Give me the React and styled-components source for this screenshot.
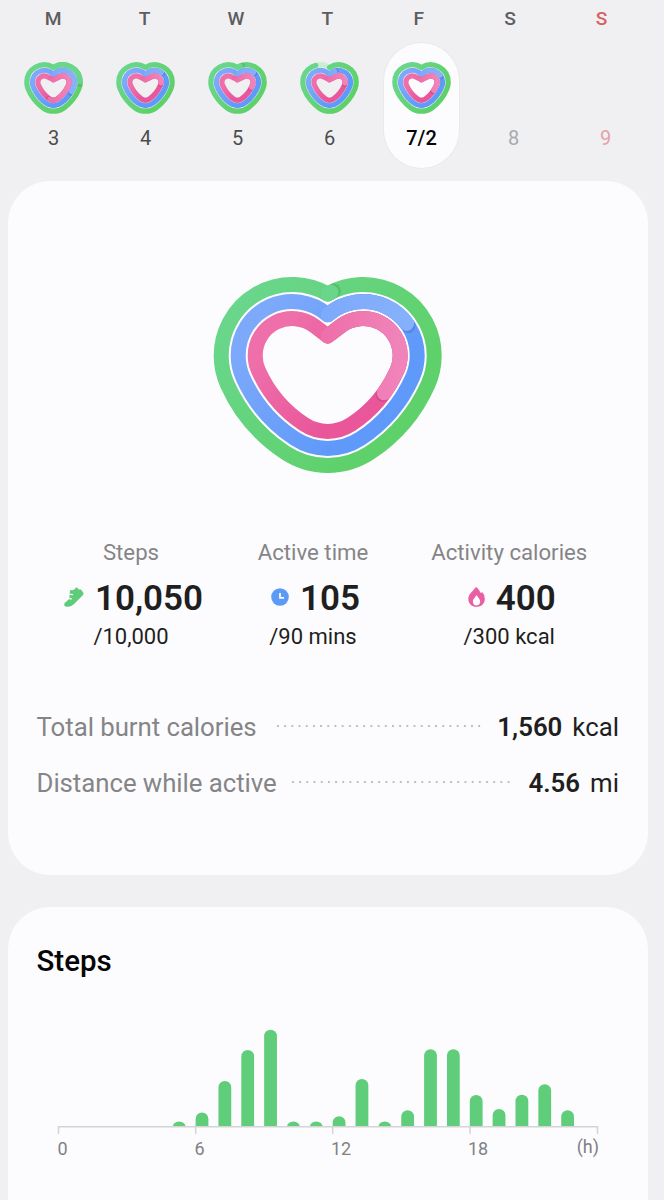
import React from "react";
import styled, { createGlobalStyle } from "styled-components";

const GlobalStyle = createGlobalStyle`
  * {
    box-sizing: border-box;
  }
  body {
    margin: 0;
    background: #f0f0f2;
    font-family: Roboto, "Liberation Sans", sans-serif;
    color: #1f1f21;
  }
`;

const Page = styled.main`
  width: 664px;
  height: 1200px;
  overflow: hidden;
  padding: 7px 0 0 7.5px;
`;

const Weekdays = styled.div`
  display: grid;
  grid-template-columns: repeat(7, 91.4px);
`;

const Weekday = styled.div`
  font-size: 19.2px;
  line-height: 24px;
  font-weight: 500;
  text-align: center;
  color: ${(props) => (props.$sunday ? "#d9605f" : "#5d5d60")};
`;

const Days = styled.div`
  display: grid;
  grid-template-columns: repeat(7, 92px);
  justify-items: center;
  margin-top: 11.5px;
`;

const Day = styled.div`
  display: flex;
  flex-direction: column;
  align-items: center;
  width: 75px;
  height: 125px;
  padding-top: 19.2px;
  border-radius: 38px;
  background: ${(props) => (props.$selected ? "#fcfcfe" : "transparent")};
  box-shadow: ${(props) => (props.$selected ? "0 0 0 1px #e9e9ec" : "none")};
`;

const HeartSlot = styled.div`
  height: 52.5px;
`;

const DayNumber = styled.div`
  margin-top: 11.8px;
  font-size: 20px;
  line-height: 24px;
  font-weight: ${(props) => (props.$selected ? 500 : 400)};
  color: ${(props) => props.$color};
`;

const Card = styled.section`
  width: 640.5px;
  border-radius: 42px;
  background: #fcfcfe;
`;

const SummaryCard = styled(Card)`
  height: 694px;
  margin-top: 13.5px;
  padding-top: 96px;
`;

const StepsCard = styled(Card)`
  height: 400px;
  margin-top: 32px;
  padding-top: 36px;
`;

const BigHeart = styled.div`
  height: 196px;
  padding-left: 205.5px;
`;

const Stats = styled.div`
  display: grid;
  grid-template-columns: 182px 182px 210.5px;
  padding-left: 32.5px;
  margin-top: 66px;
`;

const Stat = styled.div`
  display: flex;
  flex-direction: column;
  align-items: center;
`;

const StatLabel = styled.div`
  font-size: 22.2px;
  line-height: 26px;
  color: #858587;
`;

const StatValue = styled.div`
  display: flex;
  align-items: center;
  gap: 11px;
  margin: 14px 0 5.2px 5px;
  font-size: 35px;
  line-height: 40px;
  font-weight: 600;
`;

const IconSlot = styled.span`
  padding-bottom: 5px;
`;

const StatGoal = styled.div`
  font-size: 22px;
  line-height: 26px;
`;

const Totals = styled.div`
  display: flex;
  flex-direction: column;
  gap: 24px;
  margin-top: 61px;
  padding: 0 29px;
`;

const TotalRow = styled.div`
  display: flex;
  align-items: center;
  font-size: 25.8px;
  line-height: 32px;
`;

const TotalLabel = styled.span`
  color: #858587;
  letter-spacing: -0.05px;
`;

const Dots = styled.span`
  flex: 1;
  height: 2px;
  margin: 0 ${(props) => props.$right}px 2px ${(props) => props.$left}px;
  background: radial-gradient(circle at 1px 1px, #bdbdc1 0.9px, transparent 1.4px);
  background-size: 7.2px 2px;
`;

const TotalValue = styled.span`
  font-weight: 600;
  margin-right: 10px;
`;

const Title = styled.h2`
  margin: 0 0 0 29px;
  font-size: 29.5px;
  line-height: 36px;
  font-weight: 500;
  color: #050506;
`;

const Svg = styled.svg`
  display: block;
  overflow: visible;
`;

const AxisLabel = styled.text`
  font-size: 18px;
  fill: #818184;
`;

const COLORS = {
  green: { from: "#69d68b", to: "#5fd16b", over: "#69d68b", tip: "#69d68b", shadow: "#2f8f45" },
  blue: { from: "#7da9fb", to: "#5f99f9", over: "#7daafb", tip: "#87b1fb", shadow: "#2c57b8" },
  pink: { from: "#ee6fa9", to: "#e9569a", over: "#ee70aa", tip: "#f084ba", shadow: "#a0285f" },
};

// Heart outline, clockwise from the notch. The lobes are centred on (+-dx, 0) and
// turn through angle past the horizontal, then one wide arc runs down each side
// to the bottom arc, which has radius r + k.
function heartPath({ dx, r, k, depth, angle, notch }) {
  const a = (angle * Math.PI) / 180;
  const b = depth - k;
  const side = (dx * dx + b * b - k * k) / (2 * (dx * Math.cos(a) - b * Math.sin(a) - k));
  const rs = r + side;
  const rb = r + k;
  const cx = dx - side * Math.cos(a);
  const cy = -side * Math.sin(a);
  const sx = dx + r * Math.cos(a);
  const sy = r * Math.sin(a);
  const bx = (-cx / (side - k)) * rb;
  const by = b + ((b - cy) / (side - k)) * rb;

  let start = [0, -Math.sqrt(Math.max(0, r * r - dx * dx))];
  let touch = start;
  if (notch) {
    // straight run from the notch to where it touches the lobe
    const t = Math.atan2(notch, dx) + Math.acos(r / Math.hypot(dx, notch));
    start = [0, -notch];
    touch = [dx - r * Math.cos(t), -r * Math.sin(t)];
  }

  return [
    `M${start}L${touch}`,
    `A${r} ${r} 0 0 1 ${dx + r} 0`,
    `A${r} ${r} 0 0 1 ${sx} ${sy}`,
    `A${rs} ${rs} 0 0 1 ${bx} ${by}`,
    `A${rb} ${rb} 0 0 1 ${-bx} ${by}`,
    `A${rs} ${rs} 0 0 1 ${-sx} ${sy}`,
    `A${r} ${r} 0 0 1 ${-dx - r} 0`,
    `A${r} ${r} 0 0 1 ${-touch[0]} ${touch[1]}Z`,
  ].join("");
}

const SIZES = {
  big: {
    width: 229,
    height: 196,
    box: "-114.7 -78.5 229 196",
    stroke: 15,
    shade: 0.5,
    dx: 35.5,
    k: 6,
    depth: 38.9,
    angle: 24,
    rings: [
      { color: "green", r: 71 },
      { color: "blue", r: 54 },
      { color: "pink", r: 37, notch: 19.5 },
    ],
  },
  small: {
    width: 59,
    height: 52.5,
    box: "-29.5 -20.3 59 52.5",
    stroke: 5.2,
    shade: 1.5,
    dx: 9.2,
    k: 0.6,
    depth: 11.4,
    angle: 22,
    rings: [
      { color: "green", r: 17.5 },
      { color: "blue", r: 11.9 },
      { color: "pink", r: 6.4, notch: 2.5 },
    ],
  },
};

// progress is a percentage per ring; what is over 100 overlaps the first lap
const Heart = ({ id, size, progress }) => {
  const s = SIZES[size];
  return (
    <Svg width={s.width} height={s.height} viewBox={s.box} fill="none">
      <defs>
        {s.rings.map((ring) => (
          <React.Fragment key={ring.color}>
            <linearGradient id={`${id}-${ring.color}`} gradientUnits="userSpaceOnUse" x1={-ring.r} y1={-ring.r} x2={ring.r} y2={ring.r * 0.6}>
              <stop offset="0" stopColor={COLORS[ring.color].from} />
              <stop offset="1" stopColor={COLORS[ring.color].to} />
            </linearGradient>
            <linearGradient id={`${id}-${ring.color}-over`} gradientUnits="userSpaceOnUse" x1="0" y1="0" x2={ring.r + s.dx} y2="0">
              <stop offset="0" stopColor={COLORS[ring.color].over} />
              <stop offset="1" stopColor={COLORS[ring.color].tip} />
            </linearGradient>
          </React.Fragment>
        ))}
      </defs>
      {s.rings.map((ring, i) => {
        const value = progress[i];
        const extra = value - 100;
        const common = {
          d: heartPath({ ...s, ...ring }),
          pathLength: 100,
          strokeWidth: s.stroke,
          strokeLinejoin: "round",
          strokeLinecap: "round",
        };
        return (
          <g key={ring.color}>
            {value < 100 && <path {...common} stroke="#c9efd3" />}
            <path
              {...common}
              stroke={`url(#${id}-${ring.color})`}
              strokeDasharray={value < 100 ? `${value} 100` : undefined}
            />
            {extra > 0 && (
              <>
                <path
                  {...common}
                  stroke={COLORS[ring.color].shadow}
                  strokeOpacity="0.28"
                  strokeDasharray={`${extra + s.shade} 200`}
                  strokeWidth={s.stroke * 0.98}
                />
                <path
                  {...common}
                  stroke={`url(#${id}-${ring.color}-over)`}
                  strokeDasharray={`${extra} 200`}
                />
              </>
            )}
          </g>
        );
      })}
    </Svg>
  );
};

const ShoeIcon = () => (
  <Svg width="20" height="20" viewBox="74 169 61 60">
    <path
      d="M110 171Q112 168.500 115 171L118 175Q121 177 126 176L133 186Q135 189 132 193L104 221Q97 228.500 87 228.500H81Q73 228 75 219L90 204L92 181Q92 178 96 178Q105 180 110 171Z"
      fill="#5ecc78"
    />
    <path d="M88 190L100 191.500M82 203L97 204.500" stroke="#fcfcfe" strokeWidth="4" strokeLinecap="round" />
  </Svg>
);

const ClockIcon = () => (
  <Svg width="18" height="18" viewBox="0 0 18 18">
    <circle cx="9" cy="9" r="8.800" fill="#5b9bf5" />
    <path d="M9 5V9.800H13" fill="none" stroke="#fff" strokeWidth="1.700" />
  </Svg>
);

const FlameIcon = () => (
  <Svg width="17" height="20" viewBox="416 169 50 60">
    <path
      d="M439 170Q441 169 443 171Q450 178 453 186Q457 187 459 185Q466 193 466 204C466 219 455 228.500 441 228.500C427 228.500 416.500 219 416.500 204C416.500 191 431 181 436 173Z"
      fill="#ea5fa4"
    />
    <path d="M441 194Q442 194 443 196C447 202 452 206 452 213C452 220 447 224 441 224C435 224 430 220 430 213C430 206 435 202 439 196Z" fill="#fff" />
  </Svg>
);

const week = [
  { day: "M", date: "3", progress: [123, 131, 154], color: "#4c4c4f" },
  { day: "T", date: "4", progress: [100, 114, 123], color: "#4c4c4f" },
  { day: "W", date: "5", progress: [102, 114, 128], color: "#4c4c4f" },
  { day: "T", date: "6", progress: [91, 105, 123], color: "#4c4c4f" },
  { day: "F", date: "7/2", progress: [100, 117, 132], color: "#050506", selected: true },
  { day: "S", date: "8", color: "#a9a9ac" },
  { day: "S", date: "9", color: "#e3a3a5", sunday: true },
];

const stats = [
  { label: "Steps", value: "10,050", goal: "/10,000", icon: <ShoeIcon /> },
  { label: "Active time", value: "105", goal: "/90 mins", icon: <ClockIcon /> },
  { label: "Activity calories", value: "400", goal: "/300 kcal", icon: <FlameIcon /> },
];

// Bar heights per hour of the day
const hourly = [0, 0, 0, 0, 0, 5.5, 14.5, 46, 77, 97.3, 5.5, 5.5, 10.8, 48, 5.5, 16.8, 77.8, 77.8, 32, 18, 32.3, 42.8, 16.8, 0];

const AXIS_Y = 148;

const StepsChart = () => (
  <Svg width="640" height="200" viewBox="0 0 640 200">
    {hourly.map((height, hour) => {
      if (!height) return null;
      const x = 50.5 + hour * 22.85;
      const r = Math.min(6.4, height);
      const y = AXIS_Y - height;
      return (
        <path
          key={hour}
          d={`M${x} ${AXIS_Y}V${y + r}A6.400 ${r} 0 0 1 ${x + 12.8} ${y + r}V${AXIS_Y}Z`}
          fill="#5fcd79"
        />
      );
    })}
    <path d="M50.500 155V147.800H589.500V155M187.700 148V155M324.700 148V155M462 148V155" fill="none" stroke="#d4d4d6" strokeWidth="1.500" />
    <AxisLabel x="49.600" y="176.300">0</AxisLabel>
    <AxisLabel x="186.500" y="176.300">6</AxisLabel>
    <AxisLabel x="323" y="176.300">12</AxisLabel>
    <AxisLabel x="460" y="176.300">18</AxisLabel>
    <AxisLabel x="591" y="174" textAnchor="end">(h)</AxisLabel>
  </Svg>
);

const App = () => {
  return (
    <>
      <GlobalStyle />
      <Page>
        <Weekdays>
          {week.map((item) => (
            <Weekday key={item.date} $sunday={item.sunday}>
              {item.day}
            </Weekday>
          ))}
        </Weekdays>
        <Days>
          {week.map((item) => (
            <Day key={item.date} $selected={item.selected}>
              <HeartSlot>
                {item.progress && <Heart id={`day${item.date[0]}`} size="small" progress={item.progress} />}
              </HeartSlot>
              <DayNumber $selected={item.selected} $color={item.color}>
                {item.date}
              </DayNumber>
            </Day>
          ))}
        </Days>

        <SummaryCard>
          <BigHeart>
            <Heart id="today" size="big" progress={[100.6, 117, 133.2]} />
          </BigHeart>
          <Stats>
            {stats.map((item) => (
              <Stat key={item.label}>
                <StatLabel>{item.label}</StatLabel>
                <StatValue>
                  <IconSlot>{item.icon}</IconSlot>
                  {item.value}
                </StatValue>
                <StatGoal>{item.goal}</StatGoal>
              </Stat>
            ))}
          </Stats>
          <Totals>
            <TotalRow>
              <TotalLabel>Total burnt calories</TotalLabel>
              <Dots $left={20} $right={13} />
              <TotalValue>1,560</TotalValue>
              <span>kcal</span>
            </TotalRow>
            <TotalRow>
              <TotalLabel>Distance while active</TotalLabel>
              <Dots $left={15} $right={16} />
              <TotalValue>4.56</TotalValue>
              <span>mi</span>
            </TotalRow>
          </Totals>
        </SummaryCard>

        <StepsCard>
          <Title>Steps</Title>
          <StepsChart />
        </StepsCard>
      </Page>
    </>
  );
};

export default App;
